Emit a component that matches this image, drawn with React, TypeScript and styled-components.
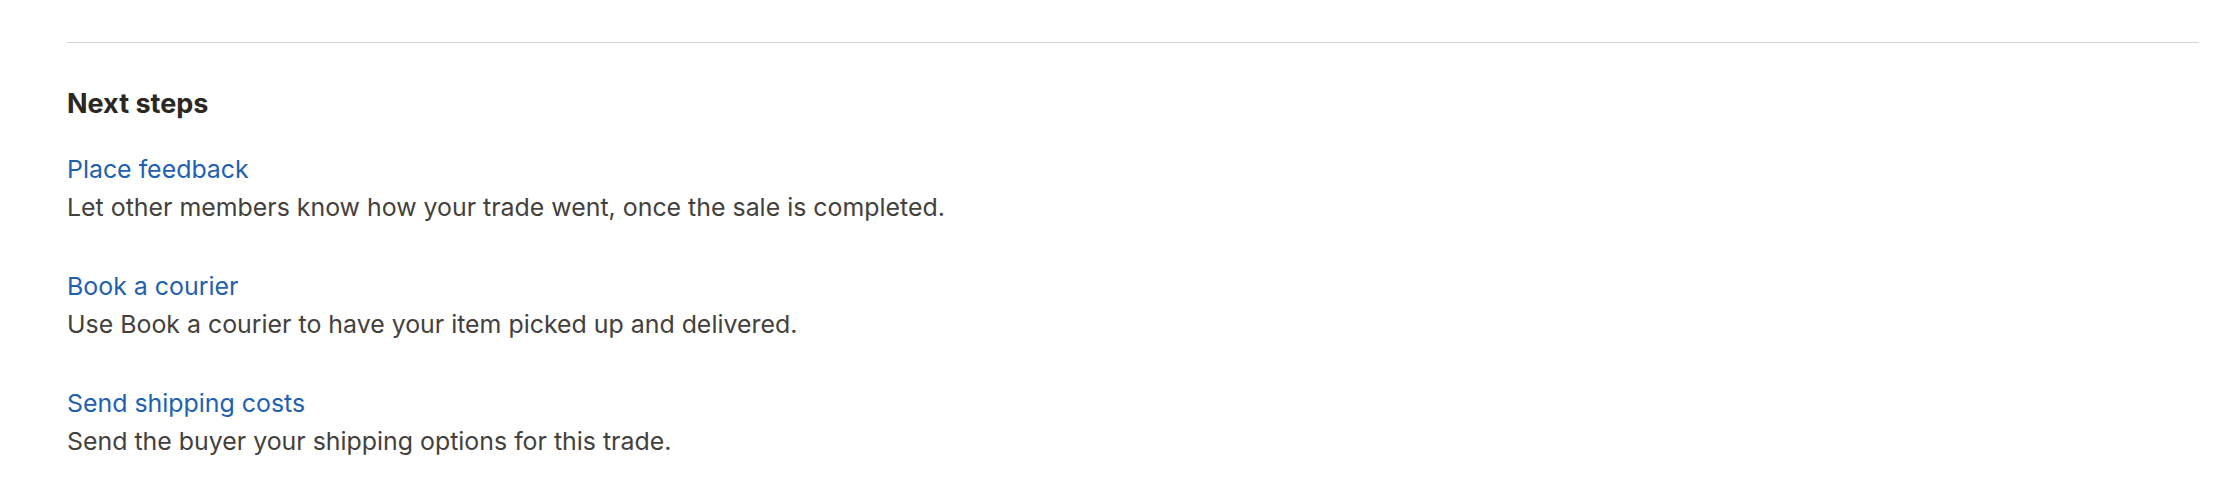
import * as React from "react";
import styled, { createGlobalStyle } from "styled-components";

const GlobalStyle = createGlobalStyle`
  html, body {
    margin: 0;
    padding: 0;
    background: #ffffff;
  }

  body {
    font-family: Inter, "Noto Sans", "Liberation Sans", sans-serif;
  }
`;

type Step = {
  title: string;
  description: string;
};

const steps: Step[] = [
  {
    title: "Place feedback",
    description:
      "Let other members know how your trade went, once the sale is completed.",
  },
  {
    title: "Book a courier",
    description: "Use Book a courier to have your item picked up and delivered.",
  },
  {
    title: "Send shipping costs",
    description: "Send the buyer your shipping options for this trade.",
  },
];

const Section = styled.section`
  padding: 42px 21px 0 67px;
`;

const Divider = styled.hr`
  margin: 0;
  border: 0;
  border-top: 1px solid #d6d3cf;
`;

const Heading = styled.h2`
  margin: 45px 0 30px;
  font-size: 27px;
  line-height: 32px;
  font-weight: 700;
  color: #2b2723;
`;

const StepList = styled.ul`
  list-style: none;
  margin: 0;
  padding: 0;
  display: flex;
  flex-direction: column;
  gap: 41px;
`;

const StepItem = styled.li`
  display: flex;
  flex-direction: column;
  font-size: 24.9px;
  line-height: 38px;
`;

const StepLink = styled.a`
  color: #1e61b0;
  text-decoration: none;
  cursor: pointer;
  align-self: flex-start;
`;

const StepText = styled.p`
  margin: 0;
  color: #44413d;
`;

const App: React.FC = () => {
  return (
    <>
      <GlobalStyle />
      <Section>
        <Divider />
        <Heading>Next steps</Heading>
        <StepList>
          {steps.map((step) => (
            <StepItem key={step.title}>
              <StepLink href="#">{step.title}</StepLink>
              <StepText>{step.description}</StepText>
            </StepItem>
          ))}
        </StepList>
      </Section>
    </>
  );
};

export default App;
